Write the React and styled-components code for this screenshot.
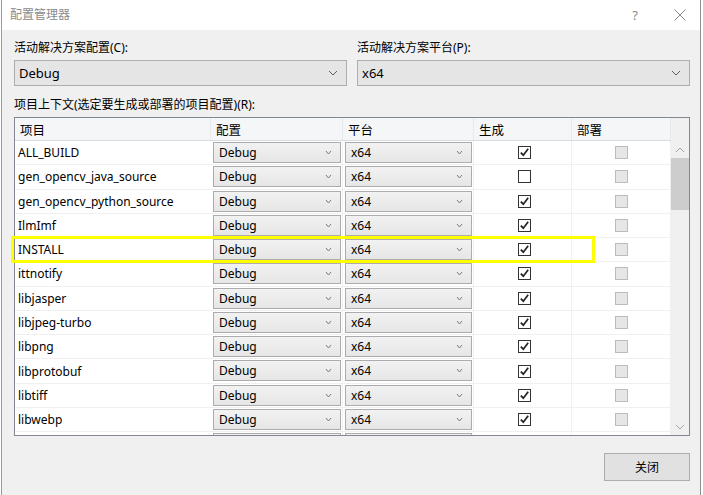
import React from 'react';
import styled, { createGlobalStyle } from 'styled-components';

const FONT = `"Noto Sans", "Noto Sans CJK SC", sans-serif`;

const GlobalStyle = createGlobalStyle`
  html, body { margin: 0; padding: 0; background: #fff; }
  body { font-family: ${FONT}; font-size: 12px; color: #000; }
  * { box-sizing: border-box; }
`;

const Window = styled.div`
  position: relative;
  margin-left: 1px;
  width: 700px;
  height: 495px;
  border-left: 1px solid #9a9a9a;
  border-right: 1px solid #8f8f8f;
  display: flex;
  flex-direction: column;
  background: #f0f0f0;
`;

const TitleBar = styled.div`
  height: 30px;
  background: #fff;
  display: flex;
  align-items: center;
  padding: 0 8px;
`;

const Title = styled.div`
  color: #8a8a8a;
  font-size: 12px;
  line-height: 16px;
`;

const TitleButtons = styled.div`
  margin-left: auto;
  display: flex;
  gap: 21px;
  align-items: center;
`;

const TitleButton = styled.div`
  width: 24px;
  height: 20px;
  display: flex;
  align-items: center;
  justify-content: center;
  color: #8a8a8a;
  font-size: 13px;
`;

const Body = styled.div`
  flex: 1;
  display: flex;
  flex-direction: column;
  padding: 0 10px 0 12px;
`;

const TopGrid = styled.div`
  display: grid;
  grid-template-columns: 333px 333px;
  column-gap: 10px;
  margin-top: 9px;
`;

const Field = styled.div`
  display: flex;
  flex-direction: column;
`;

const Label = styled.div`
  height: 17px;
  line-height: 17px;
  margin-bottom: 4px;
  font-size: 12px;
  white-space: nowrap;
`;

const Combo = styled.div`
  height: 26px;
  border: 1px solid #adadad;
  background: #e5e5e5;
  display: flex;
  align-items: center;
  padding: 0 8px 0 4px;
  font-size: 13px;
`;

const ComboText = styled.span`
  flex: 1;
`;

const ContextLabel = styled(Label)`
  margin-top: 10px;
  margin-bottom: 4px;
`;

const Table = styled.div`
  height: 319px;
  border: 1px solid #828790;
  background: #fff;
  display: flex;
`;

const Main = styled.div`
  width: 656px;
  display: flex;
  flex-direction: column;
`;

const cols = `196px 132px 131px 98px 99px`;

const HeaderRow = styled.div`
  height: 23px;
  display: grid;
  grid-template-columns: ${cols};
  background: #f4f6f8;
  border-bottom: 1px solid #d8dce2;
`;

const HeaderCell = styled.div`
  display: flex;
  align-items: center;
  padding-left: 5px;
  border-right: 1px solid #e6e9ee;
  font-size: 12.5px;
`;

const Rows = styled.div`
  flex: 1;
  overflow: hidden;
`;

const Row = styled.div`
  height: 24.27px;
  display: grid;
  grid-template-columns: ${cols};
  border-bottom: 1px solid #f0f0f0;
`;

const NameCell = styled.div`
  display: flex;
  align-items: center;
  padding-left: 3px;
  font-size: 12px;
  white-space: nowrap;
  overflow: hidden;
`;

const ComboCell = styled.div`
  padding: 1px 1px 0 2px;
  border-right: 1px solid #f0f0f0;
`;

const CellCombo = styled.div`
  height: 21px;
  border: 1px solid #acacac;
  background: linear-gradient(#f2f2f2, #e6e6e6);
  display: flex;
  align-items: center;
  padding: 0 8px 0 5px;
  font-size: 12px;
`;

const CheckCell = styled.div`
  display: flex;
  align-items: center;
  justify-content: center;
  padding-left: ${p => p.$shift || 0}px;
  border-right: 1px solid #f0f0f0;
`;

const Box = styled.div`
  width: 13px;
  height: 13px;
  border: 1px solid ${p => (p.$disabled ? '#bcbcbc' : '#333')};
  background: ${p => (p.$disabled ? '#e6e6e6' : '#fff')};
  display: flex;
  align-items: center;
  justify-content: center;
`;

const Scrollbar = styled.div`
  width: 18px;
  background: #f0f0f0;
  display: flex;
  flex-direction: column;
`;

const ScrollSpacer = styled.div`
  height: 23px;
`;

const ScrollArrow = styled.div`
  height: 17px;
  display: flex;
  align-items: center;
  justify-content: center;
`;

const Thumb = styled.div`
  height: 52px;
  background: #cdcdcd;
`;

const Track = styled.div`
  flex: 1;
`;

const Footer = styled.div`
  display: flex;
  justify-content: flex-end;
  padding-top: 17px;
`;

const Button = styled.div`
  width: 86px;
  height: 28px;
  border: 1px solid #adadad;
  background: #e1e1e1;
  display: flex;
  align-items: center;
  justify-content: center;
  font-size: 12px;
`;

const Highlight = styled.div`
  position: absolute;
  left: 9px;
  top: 236px;
  width: 584px;
  height: 27px;
  border: 3px solid #ffff00;
  pointer-events: none;
`;

const Chevron = ({ w = 5, h = 3, color = '#7a7a7a', up = false }) => (
  <svg width={w + 2} height={h + 2} viewBox={`0 0 ${w + 2} ${h + 2}`}>
    <polyline
      points={up ? `1,${h + 1} ${w / 2 + 1},1 ${w + 1},${h + 1}` : `1,1 ${w / 2 + 1},${h + 1} ${w + 1},1`}
      fill="none"
      stroke={color}
      strokeWidth="1"
    />
  </svg>
);

const Check = () => (
  <svg width="11" height="11" viewBox="0 0 11 11">
    <path d="M1.8 5.6 L4.3 8.2 L9.2 1.8" fill="none" stroke="#222" strokeWidth="1.7" />
  </svg>
);

const rows = [
  { name: 'ALL_BUILD', build: true },
  { name: 'gen_opencv_java_source', build: false },
  { name: 'gen_opencv_python_source', build: true },
  { name: 'IlmImf', build: true },
  { name: 'INSTALL', build: true },
  { name: 'ittnotify', build: true },
  { name: 'libjasper', build: true },
  { name: 'libjpeg-turbo', build: true },
  { name: 'libpng', build: true },
  { name: 'libprotobuf', build: true },
  { name: 'libtiff', build: true },
  { name: 'libwebp', build: true },
  { name: '', build: true, partial: true },
];

export default function App() {
  return (
    <>
      <GlobalStyle />
      <Window>
        <TitleBar>
          <Title>配置管理器</Title>
          <TitleButtons>
            <TitleButton>?</TitleButton>
            <TitleButton>
              <svg width="12" height="12" viewBox="0 0 12 12">
                <path d="M0.5 0.5 L11.5 11.5 M11.5 0.5 L0.5 11.5" stroke="#8a8a8a" strokeWidth="1" />
              </svg>
            </TitleButton>
          </TitleButtons>
        </TitleBar>
        <Body>
          <TopGrid>
            <Field>
              <Label>活动解决方案配置(C):</Label>
              <Combo>
                <ComboText>Debug</ComboText>
                <Chevron w={8} h={4} color="#606060" />
              </Combo>
            </Field>
            <Field>
              <Label>活动解决方案平台(P):</Label>
              <Combo>
                <ComboText>x64</ComboText>
                <Chevron w={8} h={4} color="#606060" />
              </Combo>
            </Field>
          </TopGrid>
          <ContextLabel>项目上下文(选定要生成或部署的项目配置)(R):</ContextLabel>
          <Table>
            <Main>
              <HeaderRow>
                <HeaderCell>项目</HeaderCell>
                <HeaderCell>配置</HeaderCell>
                <HeaderCell>平台</HeaderCell>
                <HeaderCell>生成</HeaderCell>
                <HeaderCell>部署</HeaderCell>
              </HeaderRow>
              <Rows>
                {rows.map((r, i) => (
                  <Row key={i}>
                    <NameCell>{r.name}</NameCell>
                    <ComboCell>
                      <CellCombo>
                        <ComboText>{r.partial ? '' : 'Debug'}</ComboText>
                        <Chevron />
                      </CellCombo>
                    </ComboCell>
                    <ComboCell>
                      <CellCombo>
                        <ComboText>{r.partial ? '' : 'x64'}</ComboText>
                        <Chevron />
                      </CellCombo>
                    </ComboCell>
                    <CheckCell $shift={3}>
                      <Box>{r.build && <Check />}</Box>
                    </CheckCell>
                    <CheckCell>
                      <Box $disabled />
                    </CheckCell>
                  </Row>
                ))}
              </Rows>
            </Main>
            <Scrollbar>
              <ScrollSpacer />
              <ScrollArrow>
                <Chevron w={8} h={4} color="#a6a6a6" up />
              </ScrollArrow>
              <Thumb />
              <Track />
              <ScrollArrow>
                <Chevron w={8} h={4} color="#a6a6a6" />
              </ScrollArrow>
            </Scrollbar>
          </Table>
          <Footer>
            <Button>关闭</Button>
          </Footer>
        </Body>
        <Highlight />
      </Window>
    </>
  );
}
